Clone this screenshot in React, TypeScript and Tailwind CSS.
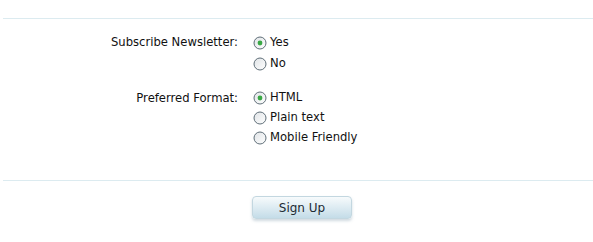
import { useState } from "react"

type Opt = { value: string, label: string }

function Radio({ checked }: { checked: boolean }) {
    return (
        <svg width="14" height="14" viewBox="0 0 14 14" className="shrink-0">
            <defs>
                <linearGradient id="rfill" x1="0" y1="0" x2="1" y2="1">
                    <stop offset="0" stopColor="#dfe3e6" />
                    <stop offset="1" stopColor="#ffffff" />
                </linearGradient>
            </defs>
            <circle cx="7" cy="7" r="6" fill="url(#rfill)" stroke="#5f6e78" strokeWidth="1" />
            {checked && <circle cx="7" cy="7" r="2.4" fill="#3aa845" />}
        </svg>
    )
}

function RadioGroup({ options, value, onChange, rowH }: { options: Opt[], value: string, onChange: (v: string) => void, rowH: string }) {
    return (
        <div className="flex flex-col">
            {options.map((o) => (
                <label
                    key={o.value}
                    className={`flex items-center gap-[3px] cursor-pointer ${rowH}`}
                    onClick={() => onChange(o.value)}
                >
                    <Radio checked={value === o.value} />
                    <span>{o.label}</span>
                </label>
            ))}
        </div>
    )
}

export default function App() {
    const [newsletter, setNewsletter] = useState("yes")
    const [format, setFormat] = useState("html")

    return (
        <div className="w-[593px] h-[242px] bg-white text-[11.6px] text-[#111] font-['DejaVu_Sans',sans-serif]">
            <div className="h-[19px] ml-[3px] border-b border-[#dcebf0]" />
            <div className="grid grid-cols-[238px_1fr] gap-x-[15px] gap-y-[14px] pt-[13px]">
                <div className="text-right leading-[20px]">Subscribe Newsletter:</div>
                <RadioGroup
                    options={[
                        { value: "yes", label: "Yes" },
                        { value: "no", label: "No" },
                    ]}
                    value={newsletter}
                    onChange={setNewsletter}
                    rowH="h-[21px]"
                />
                <div className="text-right leading-[20px]">Preferred Format:</div>
                <RadioGroup
                    options={[
                        { value: "html", label: "HTML" },
                        { value: "plain", label: "Plain text" },
                        { value: "mobile", label: "Mobile Friendly" },
                    ]}
                    value={format}
                    onChange={setFormat}
                    rowH="h-[20px]"
                />
            </div>
            <div className="h-[33px] ml-[3px] border-b border-[#dcebf0]" />
            <div className="flex pl-[252px] pt-[15px]">
                <button className="w-[100px] h-[23px] rounded-[4px] border border-[#c3d7e0] bg-gradient-to-b from-[#f7fbfc] to-[#c4dce8] shadow-[0_2px_3px_rgba(120,150,165,0.35)] text-[#1c2a33] text-[12px]">
                    Sign Up
                </button>
            </div>
        </div>
    )
}
